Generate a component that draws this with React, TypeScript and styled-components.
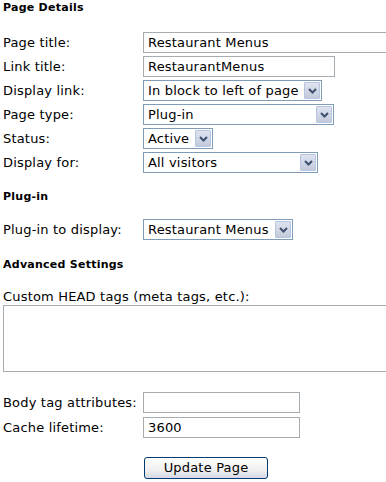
import React from 'react'
import styled, { createGlobalStyle } from 'styled-components';

const GlobalStyle = createGlobalStyle`
  html, body {
    margin: 0;
    padding: 0;
    background: #fff;
    overflow: hidden;
  }
  body {
    font-family: Verdana, "DejaVu Sans", sans-serif;
    font-size: 13px;
    letter-spacing: 0.18px;
    color: #000;
  }
`

type Field = {
  label: string,
  kind: 'input' | 'select',
  value: string,
  width: number
};

const details: Field[] = [
  { label: 'Page title:', kind: 'input', value: 'Restaurant Menus', width: 252 },
  { label: 'Link title:', kind: 'input', value: 'RestaurantMenus', width: 192 },
  { label: 'Display link:', kind: 'select', value: 'In block to left of page', width: 179 },
  { label: 'Page type:', kind: 'select', value: 'Plug-in', width: 191 },
  { label: 'Status:', kind: 'select', value: 'Active', width: 70 },
  { label: 'Display for:', kind: 'select', value: 'All visitors', width: 175 },
];

const Chevron = () => (
  <svg width="9" height="6" viewBox="0 0 9 6">
    <path d="M1 1 L4.5 4.5 L8 1" fill="none" stroke="#3f4f70" strokeWidth="2" />
  </svg>
);

const Control: React.FC<{ field: Field }> = ({ field }) => {
  if (field.kind === 'input') {
    return <TextBox width={field.width}>{field.value}</TextBox>;
  }
  return (
    <SelectBox width={field.width}>
      <SelectText>{field.value}</SelectText>
      <DropButton><Chevron /></DropButton>
    </SelectBox>
  );
};

const App: React.FC = () => {
  return (
    <>
      <GlobalStyle />
      <Page>
        <Heading>Page Details</Heading>
        <FormGrid top={17}>
          {details.map((f, index) => (
            <React.Fragment key={index}>
              <Label>{f.label}</Label>
              <Control field={f} />
            </React.Fragment>
          ))}
        </FormGrid>

        <Heading top={17}>Plug-in</Heading>
        <FormGrid top={15}>
          <Label>Plug-in to display:</Label>
          <Control field={{ label: '', kind: 'select', value: 'Restaurant Menus', width: 150 }} />
        </FormGrid>

        <Heading top={18}>Advanced Settings</Heading>
        <BlockLabel>Custom HEAD tags (meta tags, etc.):</BlockLabel>
        <TextArea />

        <FormGrid top={20} gap={4}>
          <Label>Body tag attributes:</Label>
          <TextBox width={157} />
          <Label>Cache lifetime:</Label>
          <TextBox width={157}>3600</TextBox>
        </FormGrid>

        <ButtonRow>
          <UpdateButton>Update Page</UpdateButton>
        </ButtonRow>
      </Page>
    </>
  )
}

const Page = styled.div`
  padding: 1px 0 0 3px;
  width: 383px;
  display: flex;
  flex-direction: column;
`

const Heading = styled.div<{ top?: number }>`
  font-size: 11px;
  font-weight: bold;
  letter-spacing: 0.25px;
  line-height: 14px;
  height: 14px;
  margin-top: ${props => props.top || 0}px;
`

const FormGrid = styled.div<{ top: number, gap?: number }>`
  display: grid;
  grid-template-columns: 140px auto;
  row-gap: ${props => props.gap ?? 3}px;
  align-items: center;
  margin-top: ${props => props.top}px;
`

const Label = styled.div`
  line-height: 16px;
  white-space: nowrap;
`

const BlockLabel = styled.div`
  margin-top: 17px;
  line-height: 16px;
`

const TextBox = styled.div<{ width: number }>`
  box-sizing: border-box;
  width: ${props => props.width}px;
  height: 21px;
  border: 1px solid #a5acb2;
  padding: 0 4px;
  line-height: 19px;
  white-space: nowrap;
  overflow: hidden;
  background: #fff;
`

const SelectBox = styled.div<{ width: number }>`
  box-sizing: border-box;
  width: ${props => props.width}px;
  height: 21px;
  border: 1px solid #7f9db9;
  display: flex;
  align-items: stretch;
  padding: 1px;
  background: #fff;
`

const SelectText = styled.div`
  flex: 1;
  padding: 0 3px;
  line-height: 17px;
  white-space: nowrap;
  overflow: hidden;
`

const DropButton = styled.div`
  box-sizing: border-box;
  width: 16px;
  border: 1px solid #b8c5e0;
  border-radius: 1px;
  background: linear-gradient(#dde3ef, #c3cad9);
  display: flex;
  align-items: center;
  justify-content: center;
`

const TextArea = styled.div`
  box-sizing: border-box;
  width: 400px;
  height: 67px;
  border: 1px solid #a5acb2;
  background: #fff;
`

const ButtonRow = styled.div`
  padding-left: 141px;
  margin-top: 19px;
`

const UpdateButton = styled.button`
  box-sizing: border-box;
  width: 124px;
  height: 22px;
  border: 1px solid #003c74;
  border-radius: 3px;
  background: linear-gradient(#ffffff 0%, #f0f0f0 60%, #d6d9e6 100%);
  font-family: Verdana, "DejaVu Sans", sans-serif;
  font-size: 13px;
  letter-spacing: 0.18px;
  color: #000;
  padding: 0;
  line-height: 20px;
`

export default App;
